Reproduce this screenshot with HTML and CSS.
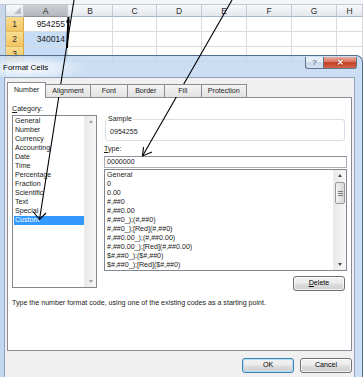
FILE: index.html
```html
<!DOCTYPE html>
<html lang="en">
<head>
    <meta charset="UTF-8">
    <meta name="viewport" content="width=device-width, initial-scale=1.0">
    <title>Format Cells</title>
    <link rel="stylesheet" href="styles.css">
</head>
<body>
    <!-- Worksheet behind the dialog -->
    <div class="sheet-top"></div>
    <div class="sheet-body">
        <div class="sheet-edge"></div>
        <div class="grid">
            <div class="hd corner"></div>
            <div class="hd col sel">A</div>
            <div class="hd col">B</div>
            <div class="hd col">C</div>
            <div class="hd col">D</div>
            <div class="hd col">E</div>
            <div class="hd col">F</div>
            <div class="hd col">G</div>
            <div class="hd col">H</div>

            <div class="hd row sel">1</div>
            <div class="cell">954255</div>
            <div class="cell"></div><div class="cell"></div><div class="cell"></div><div class="cell"></div>
            <div class="cell"></div><div class="cell"></div><div class="cell"></div>

            <div class="hd row sel">2</div>
            <div class="cell hl">340014</div>
            <div class="cell"></div><div class="cell"></div><div class="cell"></div><div class="cell"></div>
            <div class="cell"></div><div class="cell"></div><div class="cell"></div>

            <div class="hd row sel">3</div>
            <div class="cell hl"></div>
            <div class="cell"></div><div class="cell"></div><div class="cell"></div><div class="cell"></div>
            <div class="cell"></div><div class="cell"></div><div class="cell"></div>
        </div>
    </div>

    <!-- Format Cells dialog -->
    <div class="dialog">
        <div class="titlebar">
            <span class="title">Format Cells</span>
            <div class="caption-btns">
                <div class="cap help">?</div>
                <div class="cap close">&#x2715;</div>
            </div>
        </div>

        <div class="client">
            <div class="tabs">
                <div class="tab active">Number</div>
                <div class="tab">Alignment</div>
                <div class="tab">Font</div>
                <div class="tab">Border</div>
                <div class="tab">Fill</div>
                <div class="tab">Protection</div>
            </div>

            <div class="page">
                <div class="cols">
                    <div class="left">
                        <div class="label"><u>C</u>ategory:</div>
                        <div class="listbox cat">
                            <ul>
                                <li>General</li>
                                <li>Number</li>
                                <li>Currency</li>
                                <li>Accounting</li>
                                <li>Date</li>
                                <li>Time</li>
                                <li>Percentage</li>
                                <li>Fraction</li>
                                <li>Scientific</li>
                                <li>Text</li>
                                <li>Special</li>
                                <li class="selected">Custom</li>
                            </ul>
                            <div class="vscroll disabled">
                                <div class="sb-btn"><span class="arr up"></span></div>
                                <div class="sb-space"></div>
                                <div class="sb-btn"><span class="arr down"></span></div>
                            </div>
                        </div>
                    </div>

                    <div class="right">
                        <fieldset class="sample">
                            <legend>Sample</legend>
                            <div class="sample-value">0954255</div>
                        </fieldset>
                        <div class="label type-label"><u>T</u>ype:</div>
                        <div class="input">0000000</div>
                        <div class="listbox types">
                            <ul>
                                <li>General</li>
                                <li>0</li>
                                <li>0.00</li>
                                <li>#,##0</li>
                                <li>#,##0.00</li>
                                <li>#,##0_);(#,##0)</li>
                                <li>#,##0_);[Red](#,##0)</li>
                                <li>#,##0.00_);(#,##0.00)</li>
                                <li>#,##0.00_);[Red](#,##0.00)</li>
                                <li>$#,##0_);($#,##0)</li>
                                <li>$#,##0_);[Red]($#,##0)</li>
                            </ul>
                            <div class="vscroll">
                                <div class="sb-btn"><span class="arr up"></span></div>
                                <div class="thumb"></div>
                                <div class="sb-space"></div>
                                <div class="sb-btn"><span class="arr down"></span></div>
                            </div>
                        </div>
                        <div class="btn-row">
                            <button class="btn"><u>D</u>elete</button>
                        </div>
                    </div>
                </div>

                <p class="desc">Type the number format code, using one of the existing codes as a starting point.</p>
            </div>

            <div class="footer">
                <button class="btn default">OK</button>
                <button class="btn">Cancel</button>
            </div>
        </div>
    </div>

    <!-- Annotation arrows drawn over the screenshot -->
    <svg class="arrows" width="363" height="377" viewBox="0 0 363 377">
        <g fill="none" stroke="#000" stroke-width="1.1">
            <path d="M74 0 L39.5 219.5"/>
            <path d="M33.5 212 L39.5 219.5 L46 213"/>
            <path d="M232 0 L142.5 156"/>
            <path d="M143.5 147 L142.5 156 L152 152"/>
        </g>
        <path d="M68.5 17 L67 48" stroke="#000" stroke-width="2"/>
        <rect x="66.5" y="20" width="3" height="3" fill="#000"/>
    </svg>
</body>
</html>
```

FILE: styles.css
```css
/* General */
* {
    box-sizing: border-box;
}

body {
    margin: 0;
    width: 363px;
    height: 377px;
    overflow: hidden;
    position: relative;
    background: #fff;
    font-family: "Liberation Sans", Arial, sans-serif;
    color: #1b1b1b;
}

/* Worksheet */
.sheet-top {
    height: 5px;
    background: #f3f5f8;
    border-bottom: 1px solid #c5cad0;
}

.sheet-body {
    display: flex;
    width: 363px;
    height: 372px;
    overflow: hidden;
}

.sheet-edge {
    width: 6px;
    flex: none;
    background: #c8d8ea;
    border-right: 1px solid #9fb3c9;
}

.grid {
    flex: 1;
    min-width: 0;
    display: grid;
    grid-template-columns: 18px 44px 45px 44px 45px 45px 45px 45px 1fr;
    grid-template-rows: 12px repeat(3, 15px);
    font-size: 8.5px;
}

.hd {
    display: flex;
    align-items: center;
    justify-content: center;
    background: linear-gradient(#f8f9fb, #e3e7ec);
    border-right: 1px solid #c3c9d0;
    border-bottom: 1px solid #a9b8c8;
    color: #2c2c2c;
}

.hd.row {
    background: linear-gradient(to right, #f5f7f9, #e6e9ee);
    border-bottom-color: #c3c9d0;
}

.hd.col.sel {
    background: linear-gradient(#cdd0d4, #b3b7bc);
    border-bottom-color: #8d9298;
}

.hd.row.sel {
    background: linear-gradient(#fadc8e, #f2c562);
    border-right-color: #d9aa4a;
    border-bottom-color: #e2b95e;
}

.corner {
    position: relative;
}

.corner::after {
    content: "";
    position: absolute;
    right: 2px;
    bottom: 2px;
    border-left: 7px solid transparent;
    border-bottom: 7px solid #b9bec4;
}

.cell {
    display: flex;
    align-items: center;
    justify-content: flex-end;
    padding-right: 2px;
    border-right: 1px solid #d9dcdf;
    border-bottom: 1px solid #d9dcdf;
}

.cell.hl {
    background: #c7ddf5;
}

/* Dialog window */
.dialog {
    position: absolute;
    left: 0;
    top: 55px;
    width: 363px;
    height: 322px;
    background: rgba(192, 215, 240, 0.82);
    border: 1px solid #4f6d8c;
    border-left: none;
    border-bottom: none;
    border-radius: 0 7px 0 0;
    font-size: 7.1px;
    line-height: 9px;
}

.titlebar {
    display: flex;
    justify-content: space-between;
    height: 21px;
    padding-left: 3px;
    background: radial-gradient(ellipse 62px 14px at 26px 12px, rgba(255, 255, 255, 0.9), rgba(255, 255, 255, 0));
}

.title {
    font-size: 8px;
    line-height: 10px;
    padding-top: 7px;
    color: #000;
}

.caption-btns {
    display: flex;
    height: 12px;
    margin: 1px 5px 0 0;
}

.cap {
    height: 12px;
    display: flex;
    align-items: center;
    justify-content: center;
    border: 1px solid #5e738c;
    border-top: none;
    font-size: 8px;
}

.cap.help {
    width: 18px;
    border-right: none;
    border-radius: 0 0 0 3px;
    background: linear-gradient(#e6eef8 45%, #c9d8ea 50%, #d6e2f0);
    color: #3d4d62;
}

.cap.close {
    width: 34px;
    border-radius: 0 0 3px 0;
    background: linear-gradient(#eab0a2, #d6705a 45%, #c23d22 52%, #d4674a);
    color: #fff;
    font-weight: bold;
    text-shadow: 0 0 2px #7a1c0c;
}

.client {
    height: 300px;
    margin: 0 7px 0 4px;
    padding: 4px 2px 0;
    background: #f0f0f0;
    border: 1px solid #8da2b9;
    border-bottom: none;
}

/* Tabs */
.tabs {
    display: flex;
    align-items: flex-end;
    height: 16px;
    position: relative;
    z-index: 1;
}

.tab {
    min-width: 38px;
    height: 13px;
    margin: 0 -1px 1px 0;
    padding: 0 6px;
    border: 1px solid #898c95;
    border-bottom: none;
    background: linear-gradient(#f4f4f4, #e2e2e2);
    line-height: 12px;
    text-align: center;
}

.tab.active {
    min-width: 39px;
    height: 16px;
    margin-bottom: 0;
    background: #fff;
    line-height: 15px;
    position: relative;
    z-index: 2;
}

.page {
    height: 254px;
    margin-top: -1px;
    padding: 7px 4px 0;
    background: #fff;
    border: 1px solid #898c95;
}

.cols {
    display: grid;
    grid-template-columns: 85px 243px;
    column-gap: 7px;
}

.label {
    height: 9px;
}

/* List boxes */
.listbox {
    display: flex;
    border: 1px solid #828790;
    background: #fff;
    overflow: hidden;
}

.listbox ul {
    flex: 1;
    min-width: 0;
    list-style: none;
    margin: 0;
    padding: 1px 0 0 1px;
}

.listbox li {
    height: 9px;
    padding-left: 1px;
    white-space: nowrap;
}

.cat {
    height: 173px;
    margin-top: 1px;
}

.cat li.selected {
    background: #3399ff;
    color: #fff;
}

.types {
    height: 102px;
    margin-top: 1px;
}

.vscroll {
    width: 13px;
    flex: none;
    display: flex;
    flex-direction: column;
    background: linear-gradient(to right, #e9e9e9, #f7f7f7);
    border-left: 1px solid #ececec;
}

.cat .vscroll {
    width: 12px;
}

.sb-btn {
    height: 11px;
    display: flex;
    align-items: center;
    justify-content: center;
}

.sb-space {
    flex: 1;
}

.arr {
    width: 0;
    height: 0;
    border-left: 2.5px solid transparent;
    border-right: 2.5px solid transparent;
}

.arr.up {
    border-bottom: 3px solid #4d4d4d;
}

.arr.down {
    border-top: 3px solid #4d4d4d;
}

.disabled .arr.up {
    border-bottom-color: #a3a3a3;
}

.disabled .arr.down {
    border-top-color: #a3a3a3;
}

.thumb {
    height: 22px;
    margin: 1px 1px 0;
    border: 1px solid #989898;
    border-radius: 2px;
    background:
        linear-gradient(#7c7c7c, #7c7c7c) center 8px / 5px 1px no-repeat,
        linear-gradient(#7c7c7c, #7c7c7c) center 10px / 5px 1px no-repeat,
        linear-gradient(#7c7c7c, #7c7c7c) center 12px / 5px 1px no-repeat,
        linear-gradient(to right, #f3f3f3, #d8d8d8);
}

/* Right column */
.sample {
    margin: 10px 2px 0 1px;
    padding: 0 0 3px 1px;
    border: 1px solid #d5dfe5;
    border-radius: 3px;
}

.sample legend {
    padding: 0 1px;
    line-height: 9px;
}

.sample-value {
    padding: 4px 0 0 3px;
    line-height: 9px;
}

.type-label {
    margin-top: 4px;
}

.input {
    height: 12px;
    margin-top: 2px;
    padding-left: 2px;
    border: 1px solid #abadb3;
    border-top-color: #8e9198;
    line-height: 10px;
    background: #fff;
}

.btn-row {
    display: flex;
    justify-content: flex-end;
    margin: 5px 2px 0 0;
}

.desc {
    margin: 8px 0 0;
}

/* Buttons */
.btn {
    width: 52px;
    height: 15px;
    padding: 0;
    font: inherit;
    line-height: 13px;
    color: #000;
    border: 1px solid #707070;
    border-radius: 3px;
    background: linear-gradient(#f2f2f2, #ebebeb 48%, #dddddd 52%, #cfcfcf);
    box-shadow: inset 0 0 0 1px rgba(255, 255, 255, 0.7);
}

.btn.default {
    border-color: #3c7fb1;
    box-shadow: inset 0 0 0 1px #b2def7;
}

.footer {
    display: flex;
    justify-content: flex-end;
    gap: 6px;
    margin-top: 7px;
}

/* Annotation overlay */
.arrows {
    position: absolute;
    left: 0;
    top: 0;
    pointer-events: none;
}
```
